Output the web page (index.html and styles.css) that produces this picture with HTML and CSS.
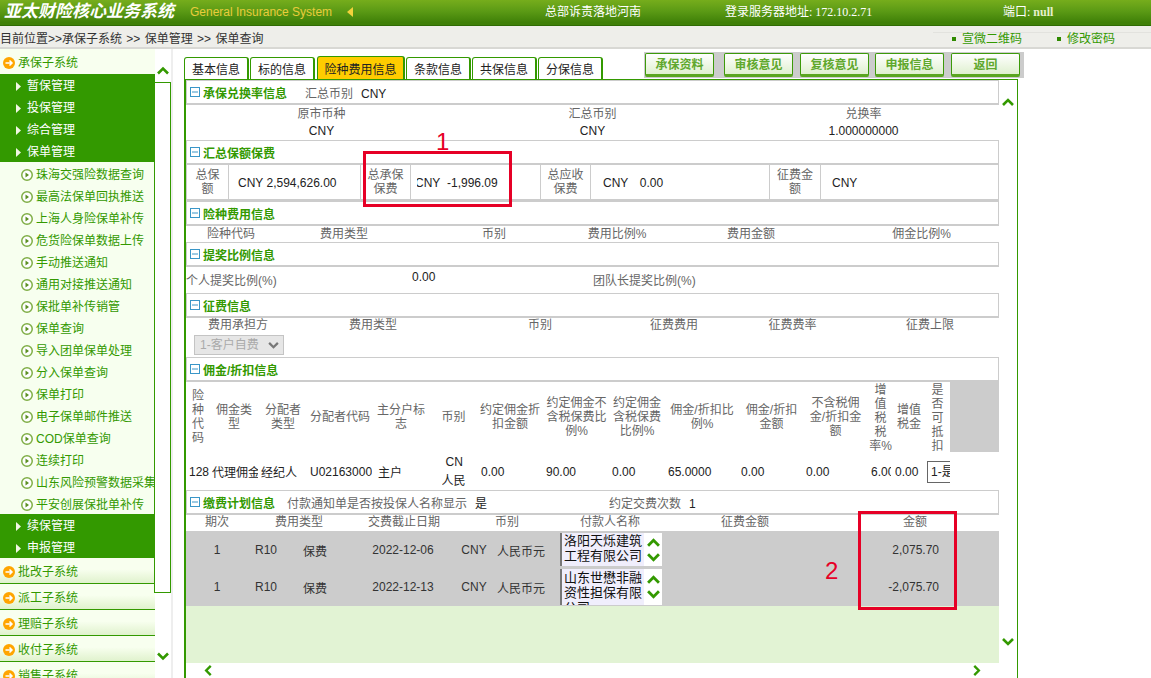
FILE: index.html
```html
<!DOCTYPE html>
<html lang="zh-CN">
<head>
<meta charset="utf-8">
<title>亚太财险核心业务系统</title>
<link rel="stylesheet" href="styles.css">
</head>
<body>
<svg class="defs" width="0" height="0" aria-hidden="true">
  <symbol id="up" viewBox="0 0 12 8"><path d="M1 7 L6 2 L11 7" fill="none" stroke="currentColor" stroke-width="2.6"/></symbol>
  <symbol id="down" viewBox="0 0 12 8"><path d="M1 1 L6 6 L11 1" fill="none" stroke="currentColor" stroke-width="2.6"/></symbol>
  <symbol id="left" viewBox="0 0 8 12"><path d="M7 1 L2 6 L7 11" fill="none" stroke="currentColor" stroke-width="2.6"/></symbol>
  <symbol id="right" viewBox="0 0 8 12"><path d="M1 1 L6 6 L1 11" fill="none" stroke="currentColor" stroke-width="2.6"/></symbol>
  <symbol id="orange" viewBox="0 0 12 12"><circle cx="6" cy="6" r="6" fill="#ffa500"/><path d="M2.5 6 H9 M6.5 3.5 L9 6 L6.5 8.500" fill="none" stroke="#fff" stroke-width="1.500"/></symbol>
  <symbol id="sub" viewBox="0 0 12 12"><circle cx="6" cy="6" r="5.250" fill="#fff" stroke="#7fae45" stroke-width="1.500"/><path d="M4.500 3.500 L8 6 L4.500 8.500 Z" fill="#5c8f22"/></symbol>
  <symbol id="tri" viewBox="0 0 5 9"><path d="M0 0 L5 4.500 L0 9 Z" fill="#f1f7e4"/></symbol>
  <symbol id="minus" viewBox="0 0 10 10"><rect x=".5" y=".5" width="9" height="9" fill="#fff" stroke="#3a96c8"/><path d="M2 5 H8" stroke="#3a96c8"/></symbol>
</svg>

<header class="topbar">
  <div class="logo">亚太财险核心业务系统</div>
  <div class="sysname">General Insurance System</div>
  <div class="collapse"></div>
  <div class="hq">总部诉责落地河南</div>
  <div class="server">登录服务器地址: 172.10.2.71</div>
  <div class="port">端口: <b>null</b></div>
</header>

<div class="crumbs">
  <div class="path">目前位置&gt;&gt;承保子系统 &gt;&gt; 保单管理 &gt;&gt; 保单查询</div>
  <div class="links">
    <a class="link qr">宣微二维码</a>
    <a class="link pwd">修改密码</a>
  </div>
</div>

<div class="main">
  <nav class="sidebar">
    <div class="head first"><svg class="ico-o"><use href="#orange"/></svg>承保子系统</div>
    <div class="mod"><svg class="ico-t"><use href="#tri"/></svg>暂保管理</div>
    <div class="mod"><svg class="ico-t"><use href="#tri"/></svg>投保管理</div>
    <div class="mod"><svg class="ico-t"><use href="#tri"/></svg>综合管理</div>
    <div class="mod"><svg class="ico-t"><use href="#tri"/></svg>保单管理</div>
    <div class="sub"><svg class="ico-s"><use href="#sub"/></svg>珠海交强险数据查询</div>
    <div class="sub"><svg class="ico-s"><use href="#sub"/></svg>最高法保单回执推送</div>
    <div class="sub"><svg class="ico-s"><use href="#sub"/></svg>上海人身险保单补传</div>
    <div class="sub"><svg class="ico-s"><use href="#sub"/></svg>危货险保单数据上传</div>
    <div class="sub"><svg class="ico-s"><use href="#sub"/></svg>手动推送通知</div>
    <div class="sub"><svg class="ico-s"><use href="#sub"/></svg>通用对接推送通知</div>
    <div class="sub"><svg class="ico-s"><use href="#sub"/></svg>保批单补传销管</div>
    <div class="sub"><svg class="ico-s"><use href="#sub"/></svg>保单查询</div>
    <div class="sub"><svg class="ico-s"><use href="#sub"/></svg>导入团单保单处理</div>
    <div class="sub"><svg class="ico-s"><use href="#sub"/></svg>分入保单查询</div>
    <div class="sub"><svg class="ico-s"><use href="#sub"/></svg>保单打印</div>
    <div class="sub"><svg class="ico-s"><use href="#sub"/></svg>电子保单邮件推送</div>
    <div class="sub"><svg class="ico-s"><use href="#sub"/></svg>COD保单查询</div>
    <div class="sub"><svg class="ico-s"><use href="#sub"/></svg>连续打印</div>
    <div class="sub"><svg class="ico-s"><use href="#sub"/></svg>山东风险预警数据采集</div>
    <div class="sub"><svg class="ico-s"><use href="#sub"/></svg>平安创展保批单补传</div>
    <div class="mod"><svg class="ico-t"><use href="#tri"/></svg>续保管理</div>
    <div class="mod"><svg class="ico-t"><use href="#tri"/></svg>申报管理</div>
    <div class="head"><svg class="ico-o"><use href="#orange"/></svg>批改子系统</div>
    <div class="head"><svg class="ico-o"><use href="#orange"/></svg>派工子系统</div>
    <div class="head"><svg class="ico-o"><use href="#orange"/></svg>理赔子系统</div>
    <div class="head"><svg class="ico-o"><use href="#orange"/></svg>收付子系统</div>
    <div class="head"><svg class="ico-o"><use href="#orange"/></svg>销售子系统</div>
  </nav>

  <div class="side-scroll">
    <svg class="chev-v top"><use href="#up"/></svg>
    <div class="thumb"></div>
    <svg class="chev-v bottom"><use href="#down"/></svg>
  </div>
  <div class="strip"></div>

  <section class="pane">
    <div class="toolbar">
      <div class="tabs">
        <div class="tab">基本信息</div>
        <div class="tab">标的信息</div>
        <div class="tab active">险种费用信息</div>
        <div class="tab">条款信息</div>
        <div class="tab">共保信息</div>
        <div class="tab">分保信息</div>
      </div>
      <div class="actions">
        <button class="btn">承保资料</button>
        <button class="btn">审核意见</button>
        <button class="btn">复核意见</button>
        <button class="btn">申报信息</button>
        <button class="btn">返回</button>
      </div>
    </div>

    <div class="frame">
      <div class="content">
        <div class="title"><svg class="minus"><use href="#minus"/></svg><h2>承保兑换率信息</h2><span class="lab lead first-lead">汇总币别</span><span class="val">CNY</span></div>
        <div class="rate">
          <div class="lab">原市币种</div><div class="lab">汇总币别</div><div class="lab">兑换率</div>
          <div class="val">CNY</div><div class="val">CNY</div><div class="val">1.000000000</div>
        </div>

        <div class="title"><svg class="minus"><use href="#minus"/></svg><h2>汇总保额保费</h2></div>
        <div class="totals">
          <div class="tl">总保额</div><div class="tv p9">CNY 2,594,626.00</div>
          <div class="tl">总承保保费</div><div class="tv clipv"><span>CNY&nbsp; -1,996.09</span></div>
          <div class="tl">总应收保费</div><div class="tv p12 wide">CNY&nbsp;&nbsp; 0.00</div>
          <div class="tl">征费金额</div><div class="tv p11">CNY</div>
        </div>

        <div class="title"><svg class="minus"><use href="#minus"/></svg><h2>险种费用信息</h2></div>
        <div class="fee lab">
          <div>险种代码</div><div>费用类型</div><div>币别</div><div>费用比例%</div><div>费用金额</div><div>佣金比例%</div>
        </div>

        <div class="title"><svg class="minus"><use href="#minus"/></svg><h2>提奖比例信息</h2></div>
        <div class="bonus">
          <span class="lab b1">个人提奖比例(%)</span><span class="val b2">0.00</span><span class="lab b3l">团队长提奖比例(%)</span>
        </div>

        <div class="title"><svg class="minus"><use href="#minus"/></svg><h2>征费信息</h2></div>
        <div class="levy lab">
          <div>费用承担方</div><div>费用类型</div><div>币别</div><div>征费费用</div><div>征费费率</div><div>征费上限</div>
        </div>
        <div class="levy-row">
          <div class="select">1-客户自费<svg class="sel-chev"><use href="#down"/></svg></div>
        </div>

        <div class="title"><svg class="minus"><use href="#minus"/></svg><h2>佣金/折扣信息</h2></div>
        <div class="comm">
          <div class="ch">险种代码</div><div class="ch">佣金类型</div><div class="ch">分配者类型</div><div class="ch tight">分配者代码</div>
          <div class="ch">主分户标志</div><div class="ch">币别</div><div class="ch">约定佣金折扣金额</div><div class="ch">约定佣金不含税保费比例%</div>
          <div class="ch">约定佣金含税保费比例%</div><div class="ch">佣金/折扣比例%</div><div class="ch">佣金/折扣金额</div><div class="ch">不含税佣金/折扣金额</div>
          <div class="ch tall">增值税税率%</div><div class="ch">增值税金</div><div class="ch tall">是否可抵扣</div><div class="gray"></div>
          <div class="cv">128</div><div class="cv cjk pl2">代理佣金</div><div class="cv cjk pl3">经纪人</div><div class="cv pl2">U02163000</div>
          <div class="cv cjk pl6">主户</div><div class="cur"><span class="cur-code">CNY</span><span class="cur-name">人民币元</span></div><div class="cv pl4">0.00</div><div class="cv">90.00</div>
          <div class="cv pl2">0.00</div><div class="cv pl4">65.0000</div><div class="cv pl1">0.00</div><div class="cv">0.00</div>
          <div class="cv rate-clip">6.00</div><div class="cv pl2">0.00</div><div class="cv pl2"><span class="mini">1-是</span></div><div></div>
        </div>

        <div class="title"><svg class="minus"><use href="#minus"/></svg><h2>缴费计划信息</h2><span class="lab lead">付款通知单是否按投保人名称显示</span><span class="val yes">是</span><span class="lab times">约定交费次数</span><span class="val">1</span></div>
        <div class="plan-head lab">
          <div>期次</div><div>费用类型</div><div>交费截止日期</div><div>币别</div><div>付款人名称</div><div>征费金额</div><div class="amt-head">金额</div>
        </div>
        <div class="plan-rows">
          <div class="plan">
            <div>1</div><div>R10</div><div class="low">保费</div><div>2022-12-06</div><div>CNY</div><div class="low">人民币元</div>
            <div class="payer"><div class="payer-text">洛阳天烁建筑工程有限公司</div><div class="payer-arrows"><svg><use href="#up"/></svg><svg><use href="#down"/></svg></div></div>
            <div class="amt">2,075.70</div>
          </div>
          <div class="plan">
            <div>1</div><div>R10</div><div class="low">保费</div><div>2022-12-13</div><div>CNY</div><div class="low">人民币元</div>
            <div class="payer"><div class="payer-text">山东世懋非融资性担保有限公司</div><div class="payer-arrows"><svg><use href="#up"/></svg><svg><use href="#down"/></svg></div></div>
            <div class="amt">-2,075.70</div>
          </div>
        </div>
        <div class="plan-empty"></div>
        <div class="hscroll"><svg><use href="#left"/></svg><svg><use href="#right"/></svg></div>
      </div>
      <div class="vscroll">
        <svg><use href="#up"/></svg>
        <svg><use href="#down"/></svg>
      </div>
    </div>
  </section>
</div>

<div class="mark box1"></div>
<div class="mark box2"></div>
<div class="num n1">1</div>
<div class="num n2">2</div>
</body>
</html>
```
FILE: styles.css
```css
* { box-sizing: border-box; }
html, body { margin: 0; padding: 0; }
body {
  width: 1151px; height: 678px; overflow: hidden; position: relative;
  background: #fff; color: #222;
  font: 12px/14px "Liberation Sans", "Noto Sans CJK SC", sans-serif;
}
.defs { position: absolute; }
svg { display: block; flex: none; }

/* top bar */
.topbar {
  height: 26px; display: flex; align-items: center; color: #fff;
  background: linear-gradient(#76ad1c, #5b9a15 45%, #3f8008 90%);
  border-bottom: 1px solid #2f6b04;
  padding-bottom: 1px;
}
.logo { width: 190px; padding-left: 4px; font-size: 17px; font-weight: bold; font-style: italic; white-space: nowrap; }
.sysname { width: 157px; color: #e9cc3c; white-space: nowrap; }
.collapse { width: 0; height: 0; border: 5px solid transparent; border-left: 0; border-right: 6px solid #f2d23c; }
.hq { margin-left: 192px; width: 180px; white-space: nowrap; }
.server { width: 278px; white-space: nowrap; font-family: "Liberation Serif", "Noto Sans CJK SC", serif; }
.port { white-space: nowrap; font-family: "Liberation Serif", "Noto Sans CJK SC", serif; }
.port b { color: #e6f0cc; }

/* breadcrumb */
.crumbs {
  height: 23px; background: #eeeeea; border-bottom: 2px solid #d8d8d4;
  display: flex; justify-content: space-between; align-items: center; color: #333;
}
.path { white-space: pre; word-spacing: 1px; padding-top: 5px; }
.links {
  width: 218px; height: 15px; margin-top: 6px; padding: 0 0 2px 29px; border-top: 1px solid #e2e2de;
  display: flex; color: #339900;
}
.link { display: flex; align-items: center; white-space: nowrap; line-height: 13px; }
.link::before { content: ""; width: 4px; height: 4px; background: #2f8a00; margin-right: 6px; }
.qr { width: 105px; margin-left: -10px; }

/* main */
.main { height: 629px; display: flex; overflow: hidden; }

.sidebar { width: 155px; flex: none; overflow: hidden; background: #f7ffef; color: #339900; }
.head {
  height: 26px; display: flex; align-items: center; gap: 3px; padding: 3px 0 0 3px;
  background: linear-gradient(#f8ffef 45%, #e0f2cd);
  border-bottom: 1px solid #339900; white-space: nowrap;
}
.head.first { height: 25px; padding-top: 2px; background: #f8ffef; border-bottom: 0; }
.ico-o { width: 12px; height: 12px; }
.mod {
  height: 22px; display: flex; align-items: center; background: #339900; color: #fff;
  padding: 2px 0 0 16px; gap: 6px; white-space: nowrap;
}
.ico-t { width: 5px; height: 9px; }
.sub {
  height: 22px; display: flex; align-items: center; padding: 4px 0 0 21px; gap: 3px;
  white-space: nowrap; overflow: hidden; border-right: 1px solid #339900;
}
.ico-s { width: 12px; height: 12px; }

.side-scroll { width: 17px; flex: none; margin-left: -1px; display: flex; flex-direction: column; align-items: center; }
.chev-v { width: 12px; height: 9px; color: #339900; }
.chev-v.top { margin: 17px 0 7px; }
.thumb { align-self: stretch; height: 511px; border: 1px solid #339900; background: #fff; }
.chev-v.bottom { margin-top: 59px; }
.strip { width: 2px; flex: none; background: #eeeeee; }

/* right pane */
.pane { width: 840px; flex: none; margin-left: 11px; display: flex; flex-direction: column; }
.toolbar { height: 30px; display: flex; justify-content: space-between; }
.tabs { display: flex; align-items: flex-end; gap: 1px; }
.tab {
  width: 65px; height: 22px; background: #fff; color: #222;
  border: 1px solid #339900; border-bottom: 0; border-radius: 3px 3px 0 0;
  text-align: center; line-height: 25px; border-right-width: 2px;
}
.tab.active { width: 88px; height: 23px; margin-left: 1px; background: #ffcc00; line-height: 26px; }
.actions {
  width: 380px; height: 26px; margin-top: 3px; background: #cccccc;
  display: flex; padding: 1px 0 0 1px;
}
.btn {
  flex: none; width: 69px; height: 24px; padding: 2px 0 0; margin-right: 7px; font: inherit; font-weight: bold; color: #5fa82d;
  background: linear-gradient(#fff, #dff0cf);
  border: 1px solid #3c9a0a; border-bottom: 3px solid #5aa620; border-radius: 2px;
}
.btn:first-child { margin-right: 10px; }
.btn:nth-child(3) { margin-right: 6px; }
.btn:last-child { margin-right: 0; }

.frame {
  flex: 1; width: 834px; display: flex; overflow: hidden;
  border-left: 2px solid #339900; border-right: 1px solid #339900; border-top: 1px solid #339900;
}
.content { width: 813px; flex: none; }
.vscroll { flex: 1; display: flex; flex-direction: column; justify-content: space-between; align-items: center; padding: 18px 0 32px; color: #339900; }
.vscroll svg { width: 12px; height: 8px; }

.title {
  height: 25px; display: flex; align-items: center; border: 1px solid #ccc; border-bottom-width: 2px;
  padding-left: 3px; white-space: nowrap; background: #fff;
}
.title h2, .title span { padding-top: 3px; }
.minus { width: 10px; height: 10px; margin-right: 3px; }
h2 { margin: 0; font: inherit; font-weight: bold; color: #339900; }
.lab { color: #666; }
.val { color: #222; }
.lead { margin-left: 12px; }
.lead.first-lead { margin-left: 18px; }
.title .val { margin-left: 8px; }
.times { margin-left: 122px; }

.rate { display: grid; grid-template-columns: repeat(3, 1fr); grid-auto-rows: 17px; height: 35px; text-align: center; align-items: center; }

.totals {
  height: 36px; display: grid; grid-template-columns: 42px 132px 50px 130px 50px 179px 51px 1fr;
  border: 1px solid #ccc; border-top: 0; border-bottom: 2px solid #ccc;
}
.tl { display: flex; align-items: center; justify-content: center; text-align: center; color: #666; line-height: 14px; border-right: 1px solid #ccc; padding: 0 5px; }
.tv { display: flex; align-items: center; border-right: 1px solid #ccc; padding-top: 2px; white-space: pre; overflow: hidden; color: #222; }
.tv:last-child { border-right: 0; }
.p9 { padding-left: 9px; }
.p11 { padding-left: 11px; }
.p12 { padding-left: 12px; }
.wide { word-spacing: .5px; }
.clipv { padding-left: 6px; }
.clipv span { display: block; flex: 1; overflow: hidden; text-indent: -2px; }

.fee { height: 16px; display: grid; grid-template-columns: 90px 136px 164px 82px 186px 155px; text-align: center; line-height: 17px; }
.bonus { height: 26px; display: flex; white-space: nowrap; }
.b1 { width: 226px; margin-top: 7px; }
.b2 { width: 181px; margin-top: 3px; }
.b3l { margin-top: 7px; }
.levy { height: 15px; display: grid; grid-template-columns: 104px 166px 168px 100px 137px 138px; text-align: center; line-height: 15px; }
.levy-row { height: 24px; padding: 2px 0 0 8px; }
.select {
  width: 90px; height: 20px; display: flex; align-items: center; justify-content: space-between;
  padding: 0 4px 0 5px; background: #e6e6e6; border: 1px solid #c4c4c4; color: #aaa;
}
.sel-chev { width: 11px; height: 7px; color: #777; }

.comm { display: grid; grid-template-columns: 24px 48px 50px 64px 58px 47px 66px 67px 54px 76px 63px 65px 25px 32px 25px 49px; grid-template-rows: 70px 38px; }
.ch { display: flex; align-items: center; justify-content: center; text-align: center; color: #666; padding: 0 3px; overflow: hidden; line-height: 14px; word-break: break-all; }
.ch.tight { padding: 0 1px; }
.ch.tall { align-items: flex-start; padding: 1px 1px 0; }
.ch:first-child { padding: 0 4px; }
.gray { background: #ccc; }
.cv { display: flex; align-items: center; padding: 1px 0 0 3px; color: #222; overflow: hidden; white-space: nowrap; }
.cv.cjk { padding-top: 4px; }
.cv.pl1 { padding-left: 1px; }
.cv.pl2 { padding-left: 2px; }
.cv.pl3 { padding-left: 3px; }
.cv.pl4 { padding-left: 4px; }
.cv.pl6 { padding-left: 6px; }
.rate-clip { margin-right: 2px; }
.cur { width: 24px; height: 38px; justify-self: center; padding-top: 1px; line-height: 19px; color: #222; overflow: hidden; }
.cur-code { display: block; width: 21px; padding-left: 4px; height: 19px; overflow: hidden; white-space: nowrap; }
.cur-name { display: block; height: 19px; overflow: hidden; }
.mini { display: block; height: 22px; width: 40px; flex: none; border: 1px solid #666; padding: 3px; line-height: 14px; background: #fff; }

.plan-head { height: 16px; display: grid; grid-template-columns: 62px 102px 108px 98px 108px 162px 1fr; text-align: center; line-height: 15px; }
.amt-head { padding-left: 5px; }
.plan-rows { background: #ccc; height: 75px; }
.plan { height: 37px; display: grid; grid-template-columns: 62px 36px 62px 114px 28px 66px 108px 1fr; align-items: center; text-align: center; color: #333; }
.plan + .plan { height: 38px; }
.low { padding-top: 4px; }
.amt { text-align: right; padding-right: 60px; }
.payer { height: 33px; width: 102px; margin-left: 6px; display: flex; background: #fff; overflow: hidden; }
.plan + .plan .payer { height: 36px; }
.payer-text { width: 84px; height: 100%; padding: 1px 0 0 2px; background: #f0eefc; border-left: 2px solid #777; color: #111; font-size: 13px; line-height: 14.500px; text-align: left; overflow: hidden; word-break: break-all; }
.plan + .plan .payer-text { line-height: 15px; }
.payer-arrows { flex: 1; display: flex; flex-direction: column; align-items: center; justify-content: center; gap: 6px; color: #339900; }
.payer-arrows svg { width: 13px; height: 9px; }
.plan-empty { height: 57px; background: #e2f3d4; }
.hscroll { height: 15px; display: flex; justify-content: space-between; align-items: center; padding: 0 18px; color: #339900; }
.hscroll svg { width: 8px; height: 11px; }

/* hand-drawn annotations lying over the screenshot */
.mark { position: absolute; border: 3px solid #e60026; }
.box1 { left: 363px; top: 151px; width: 149px; height: 56px; }
.box2 { left: 858px; top: 511px; width: 99px; height: 99px; }
.num { position: absolute; font-size: 24px; line-height: 24px; color: #e60026; }
.n1 { left: 436px; top: 130px; }
.n2 { left: 825px; top: 559px; }
```
